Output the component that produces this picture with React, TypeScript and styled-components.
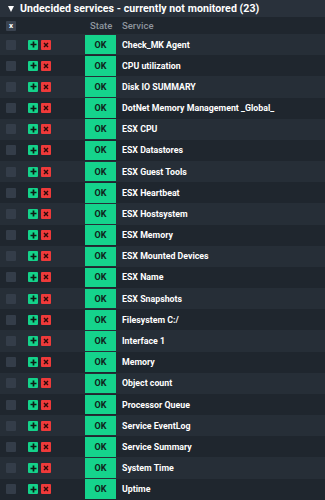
import React from 'react';
import styled, { createGlobalStyle } from 'styled-components';

const services = [
    'Check_MK Agent',
    'CPU utilization',
    'Disk IO SUMMARY',
    'DotNet Memory Management _Global_',
    'ESX CPU',
    'ESX Datastores',
    'ESX Guest Tools',
    'ESX Heartbeat',
    'ESX Hostsystem',
    'ESX Memory',
    'ESX Mounted Devices',
    'ESX Name',
    'ESX Snapshots',
    'Filesystem C:/',
    'Interface 1',
    'Memory',
    'Object count',
    'Processor Queue',
    'Service EventLog',
    'Service Summary',
    'System Time',
    'Uptime',
];

const GlobalStyle = createGlobalStyle`
  html, body {
    margin: 0;
    padding: 0;
    background: #1f262e;
  }
  body {
    font-family: Roboto, "Liberation Sans", sans-serif;
  }
`;

const App: React.FC = () => {
    return (
        <>
            <GlobalStyle />
            <Panel>
                <TitleBar>
                    <Triangle />
                    <Title>Undecided services - currently not monitored (23)</Title>
                </TitleBar>
                <HeaderRow>
                    <CheckCell>
                        <ToggleAll>x</ToggleAll>
                    </CheckCell>
                    <ActionCell />
                    <StateHead>State</StateHead>
                    <ServiceHead>Service</ServiceHead>
                </HeaderRow>
                {services.map((name, i) => (
                    <Row key={name} $odd={i % 2 === 1}>
                        <CheckCell>
                            <Checkbox />
                        </CheckCell>
                        <ActionCell>
                            <IconButton $color="#14d28a">
                                <svg width="7" height="7" viewBox="0 0 7 7">
                                    <path d="M3.5 0.5V6.5M0.5 3.5H6.5" stroke="#0e1a14" strokeWidth="1.7" />
                                </svg>
                            </IconButton>
                            <IconButton $color="#ee3a3a">
                                <svg width="6" height="6" viewBox="0 0 6 6">
                                    <path d="M1 1L5 5M5 1L1 5" stroke="#2a0a0a" strokeWidth="1.4" />
                                </svg>
                            </IconButton>
                        </ActionCell>
                        <StateCell>
                            <StateBadge>OK</StateBadge>
                        </StateCell>
                        <ServiceName>{name}</ServiceName>
                    </Row>
                ))}
            </Panel>
        </>
    );
};

// Styled Components

const Panel = styled.div`
  width: 325px;
  background: #1f262e;
`;

const TitleBar = styled.div`
  height: 17px;
  display: flex;
  align-items: center;
  padding-left: 8px;
  gap: 6px;
  background: #29313b;
`;

const Triangle = styled.div`
  width: 0;
  height: 0;
  border-left: 3.5px solid transparent;
  border-right: 3.5px solid transparent;
  border-top: 6px solid #ffffff;
`;

const Title = styled.span`
  color: #ffffff;
  font-weight: 700;
  font-size: 10.6px;
  letter-spacing: 0.05px;
  white-space: nowrap;
`;

const HeaderRow = styled.div`
  height: 17px;
  display: flex;
  align-items: center;
  background: #1f262e;
`;

const Row = styled.div<{ $odd: boolean }>`
  height: 21.18px;
  display: flex;
  align-items: center;
  background: ${(p) => (p.$odd ? '#1f262e' : '#262e37')};
`;

const CheckCell = styled.div`
  width: 28px;
  padding-left: 6px;
  box-sizing: border-box;
  display: flex;
  align-items: center;
`;

const ToggleAll = styled.div`
  width: 10px;
  height: 10px;
  border-radius: 1px;
  background: #3a4350;
  color: #ffffff;
  font-size: 8px;
  font-weight: 700;
  line-height: 9px;
  text-align: center;
`;

const Checkbox = styled.div`
  width: 10px;
  height: 10px;
  border-radius: 1px;
  background: #343d49;
`;

const ActionCell = styled.div`
  width: 57px;
  display: flex;
  gap: 3px;
  align-items: center;
`;

const IconButton = styled.div<{ $color: string }>`
  width: 10px;
  height: 10px;
  background: ${(p) => p.$color};
  border-radius: 1px;
  display: flex;
  align-items: center;
  justify-content: center;
`;

const StateCell = styled.div`
  width: 37px;
  height: 100%;
  display: flex;
  align-items: center;
`;

const StateBadge = styled.div`
  width: 31px;
  height: 19.6px;
  background: #15d38c;
  color: #10221a;
  font-size: 9px;
  font-weight: 700;
  display: flex;
  align-items: center;
  justify-content: center;
`;

const StateHead = styled.div`
  width: 37px;
  color: #8e959e;
  font-size: 9.5px;
  font-weight: 500;
  padding-left: 5px;
  box-sizing: border-box;
`;

const ServiceHead = styled.div`
  color: #8e959e;
  font-size: 9.5px;
  font-weight: 500;
`;

const ServiceName = styled.div`
  color: #ffffff;
  font-size: 8.8px;
  font-weight: 700;
  white-space: nowrap;
`;

export default App;
